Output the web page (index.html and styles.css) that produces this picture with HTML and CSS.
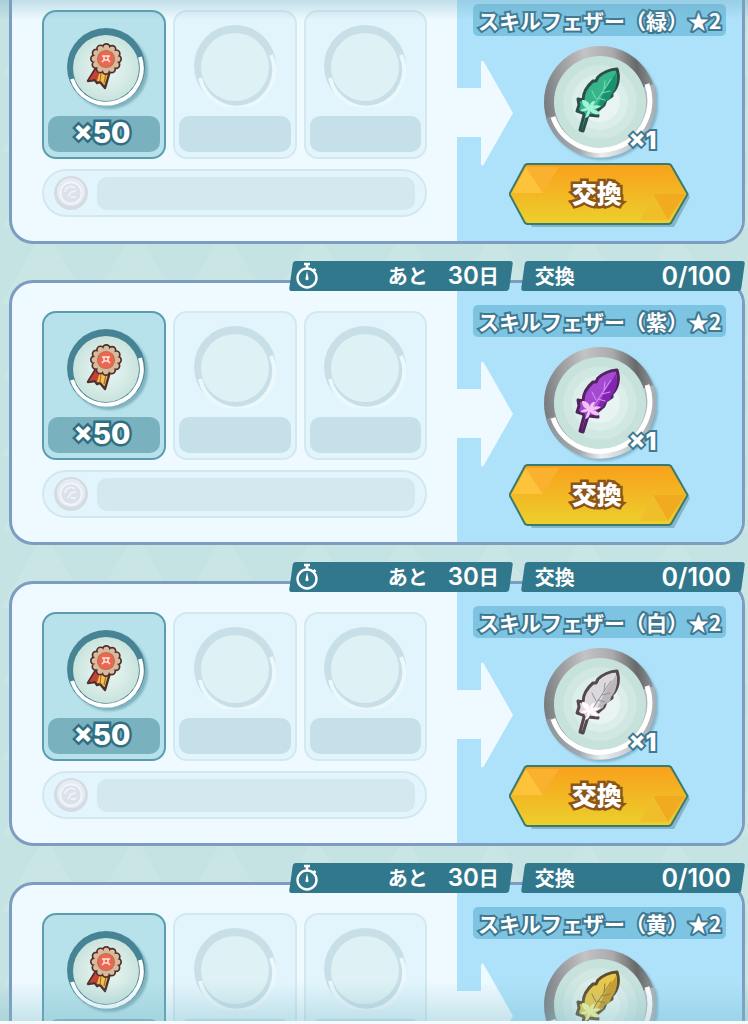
FILE: index.html
```html
<!DOCTYPE html>
<html lang="ja">
<head>
  <meta charset="UTF-8">
  <meta name="viewport" content="width=device-width, initial-scale=1">
  <title>交換所</title>
  <link rel="stylesheet" href="styles.css">
</head>
<body>
  <!-- shared icons -->
  <svg class="defs" width="0" height="0" aria-hidden="true">
    <defs>
      <linearGradient id="metalTop" x1="0" y1="0.5" x2="1" y2="0.4">
        <stop offset="0" stop-color="#777b7e"/>
        <stop offset="0.1" stop-color="#8c8f92"/>
        <stop offset="0.4" stop-color="#c3c2c4"/>
        <stop offset="0.65" stop-color="#aaa9ab"/>
        <stop offset="0.85" stop-color="#66686a"/>
        <stop offset="1" stop-color="#929799"/>
      </linearGradient>
      <linearGradient id="metalBottom" x1="0" y1="0.5" x2="1" y2="0.5">
        <stop offset="0" stop-color="#8e9498"/>
        <stop offset="0.3" stop-color="#a2a8ad"/>
        <stop offset="0.5" stop-color="#e9eef0"/>
        <stop offset="1" stop-color="#a5adb2"/>
      </linearGradient>
      <linearGradient id="gold" x1="0" y1="0" x2="0" y2="1">
        <stop offset="0" stop-color="#f9a01b"/>
        <stop offset="1" stop-color="#ecd02d"/>
      </linearGradient>
      <radialGradient id="disk">
        <stop offset="0" stop-color="#ebf6f4"/>
        <stop offset="0.5" stop-color="#dceeea"/>
        <stop offset="1" stop-color="#c9e3dd"/>
      </radialGradient>

      <symbol id="timer" viewBox="0 0 24 28">
        <circle cx="12" cy="16" r="9.5" fill="none" stroke="#fff" stroke-width="2.4"/>
        <path d="M9 2h6M12 2v4M18.5 7l2 2" stroke="#fff" stroke-width="2.6" fill="none"/>
        <path d="M12 9l1.4 7a1.6 1.6 0 1 1-2.8 0z" fill="#fff"/>
      </symbol>

      <symbol id="medal" viewBox="0 0 82 82">
        <circle cx="43" cy="42" r="39" fill="#468495"/>
        <circle cx="43" cy="43" r="33" fill="url(#disk)"/>
        <path d="M77 32A35 35 0 1 1 9 54" fill="none" stroke="#fff" stroke-width="4"/>
        <g transform="translate(2 2)" stroke-linejoin="round">
          <path d="M31 41L23 54l7-1 2 3 3-1 5 6 5-17z" fill="#f3c14f" stroke="#4d3029" stroke-width="2.4"/>
          <path d="M31 42L24 53l6-1 2 2 3-10z" fill="#c74135"/>
          <path d="M36 46l-1 9M41 47l-2 9" stroke="#b16a2c" stroke-width="1.2" fill="none"/>
          <g fill="none" stroke-linecap="round" stroke-dasharray="0 6.02">
            <circle cx="41" cy="32" r="11.5" stroke="#4d3029" stroke-width="9"/>
            <circle cx="41" cy="32" r="11.5" stroke="#dcbb9f" stroke-width="5.6"/>
          </g>
          <circle cx="41" cy="32" r="11.5" fill="#d9b79b"/>
          <circle cx="41" cy="32" r="8.5" fill="#ed6650" stroke="#b97454" stroke-width="1.2"/>
          <path d="M37 29h8M39 29v4l-2 2M43 29v4l2 2M39 33h4" stroke="#ffe5dc" stroke-width="1.5" fill="none"/>
        </g>
      </symbol>

      <symbol id="ring" viewBox="0 0 82 82">
        <circle cx="41" cy="41" r="41" fill="#c8dfe7"/>
        <circle cx="41" cy="42" r="34" fill="#def1f4"/>
        <path d="M77 30A37.500 37.500 0 1 1 6 53" fill="none" stroke="#ebf8fc" stroke-width="4"/>
      </symbol>

      <symbol id="coin" viewBox="0 0 34 34">
        <circle cx="17" cy="17" r="17" fill="#d4dbe3"/>
        <circle cx="17" cy="16" r="14" fill="#e6ecf2"/>
        <circle cx="17" cy="17" r="10.500" fill="#dce2e9" stroke="#f3f7fa" stroke-width="1.5"/>
        <path d="M11 16a6 6 0 0 1 10-4M14 21l3-5 5-1M17 21h5" fill="none" stroke="#eef3f7" stroke-width="1.8"/>
      </symbol>

      <symbol id="feather" viewBox="0 0 112 112">
        <circle cx="56" cy="56" r="56" fill="url(#metalTop)"/>
        <path d="M110 38A56 56 0 1 1 2 72L56 56z" fill="url(#metalBottom)"/>
        <circle cx="56" cy="56" r="46" fill="#c7e1db"/>
        <circle cx="56" cy="56" r="37" fill="#d1e7e2"/>
        <circle cx="56" cy="56" r="28" fill="#dceeea"/>
        <circle cx="56" cy="56" r="20" fill="#e7f4f1"/>
        <path d="M103 38A49 49 0 1 1 9 71" fill="none" stroke="#fff" stroke-width="5"/>
        <g stroke-linejoin="round" stroke-linecap="round">
          <path class="vane" d="M73 23C66 23 58 27 54 31l-2 4-3 0c-7 6-10 12-10 19l-5-1 1 6-2 6 6 2 1 2-4 15 3 1 5-16 10 1-1-5 7-6 2-5 6-4 0-3c6-6 8-15 5-24z"/>
          <path class="shade" d="M72 27c2 9 0 17-5 22l-1 4-6 4-1 3-7 3 9-19z"/>
          <path class="rib" d="M67 33L49 60M60 43l1-8M58 47l8-2M52 53l-4-8M54 52l7 2"/>
          <path class="petal" d="M46 60c-1-5-5-6-8-6 0 4 2 7 5 8-3 0-5 1-7 3 3 1 6 0 8-1l-3 8c4-1 5-4 5-7 3 3 6 4 10 3-1-3-4-4-7-5 3 0 6-1 8-3-3-1-6-1-8 0l2-5c-3 0-5 2-5 5z"/>
        </g>
      </symbol>

      <symbol id="plate" viewBox="0 0 182 64">
        <path d="M21 5h144l16 29-16 30H23L6 36z" fill="#86b4c8"/>
        <path d="M18 1h142l2 1 16 28q1 1 0 2l-16 28-2 1H18l-2-1L1 32q-1-1 0-2L16 2z" fill="url(#gold)" stroke="#397c6f" stroke-width="2"/>
        <path d="M17 4l17 26H3z" fill="#fcc33b"/>
        <path d="M17 4h33L34 30z" fill="#fbb130"/>
        <path d="M144 31h32l-17 26z" fill="#f0ab20"/>
        <path d="M144 31l15 26h-28z" fill="#efbe29"/>
      </symbol>

      <symbol id="arrow" viewBox="0 0 68 106">
        <path d="M0 28h36V2q1-3 3 0l29 51-29 51q-2 3-3 0V77H0z" fill="#eefaff"/>
      </symbol>
    </defs>
  </svg>

  <main class="screen">
    <div class="list">

      <article class="card green">
        <div class="panel">
          <section class="cost">
            <div class="slots">
              <div class="slot active"><svg class="ring"><use href="#medal"/></svg><div class="qty">×50</div></div>
              <div class="slot"><svg class="ring"><use href="#ring"/></svg><div class="qty"></div></div>
              <div class="slot"><svg class="ring"><use href="#ring"/></svg><div class="qty"></div></div>
            </div>
            <div class="money"><svg class="coin"><use href="#coin"/></svg><div class="amount"></div></div>
          </section>
          <section class="reward">
            <svg class="arrow"><use href="#arrow"/></svg>
            <h2 class="name">スキルフェザー（緑）★2</h2>
            <div class="item"><svg class="feather"><use href="#feather"/></svg><span class="times">×1</span></div>
            <button type="button" class="bt"><svg class="plate"><use href="#plate"/></svg><span class="bt-text">交換</span></button>
          </section>
        </div>
      </article>

      <article class="card purple">
        <header class="tags">
          <div class="tag"><svg class="timer"><use href="#timer"/></svg><span>あと　<span class="num">30</span>日</span></div>
          <div class="tag"><span>交換</span><span class="count">0/100</span></div>
        </header>
        <div class="panel">
          <section class="cost">
            <div class="slots">
              <div class="slot active"><svg class="ring"><use href="#medal"/></svg><div class="qty">×50</div></div>
              <div class="slot"><svg class="ring"><use href="#ring"/></svg><div class="qty"></div></div>
              <div class="slot"><svg class="ring"><use href="#ring"/></svg><div class="qty"></div></div>
            </div>
            <div class="money"><svg class="coin"><use href="#coin"/></svg><div class="amount"></div></div>
          </section>
          <section class="reward">
            <svg class="arrow"><use href="#arrow"/></svg>
            <h2 class="name">スキルフェザー（紫）★2</h2>
            <div class="item"><svg class="feather"><use href="#feather"/></svg><span class="times">×1</span></div>
            <button type="button" class="bt"><svg class="plate"><use href="#plate"/></svg><span class="bt-text">交換</span></button>
          </section>
        </div>
      </article>

      <article class="card white">
        <header class="tags">
          <div class="tag"><svg class="timer"><use href="#timer"/></svg><span>あと　<span class="num">30</span>日</span></div>
          <div class="tag"><span>交換</span><span class="count">0/100</span></div>
        </header>
        <div class="panel">
          <section class="cost">
            <div class="slots">
              <div class="slot active"><svg class="ring"><use href="#medal"/></svg><div class="qty">×50</div></div>
              <div class="slot"><svg class="ring"><use href="#ring"/></svg><div class="qty"></div></div>
              <div class="slot"><svg class="ring"><use href="#ring"/></svg><div class="qty"></div></div>
            </div>
            <div class="money"><svg class="coin"><use href="#coin"/></svg><div class="amount"></div></div>
          </section>
          <section class="reward">
            <svg class="arrow"><use href="#arrow"/></svg>
            <h2 class="name">スキルフェザー（白）★2</h2>
            <div class="item"><svg class="feather"><use href="#feather"/></svg><span class="times">×1</span></div>
            <button type="button" class="bt"><svg class="plate"><use href="#plate"/></svg><span class="bt-text">交換</span></button>
          </section>
        </div>
      </article>

      <article class="card yellow">
        <header class="tags">
          <div class="tag"><svg class="timer"><use href="#timer"/></svg><span>あと　<span class="num">30</span>日</span></div>
          <div class="tag"><span>交換</span><span class="count">0/100</span></div>
        </header>
        <div class="panel">
          <section class="cost">
            <div class="slots">
              <div class="slot active"><svg class="ring"><use href="#medal"/></svg><div class="qty"></div></div>
              <div class="slot"><svg class="ring"><use href="#ring"/></svg><div class="qty"></div></div>
              <div class="slot"><svg class="ring"><use href="#ring"/></svg><div class="qty"></div></div>
            </div>
            <div class="money"><svg class="coin"><use href="#coin"/></svg><div class="amount"></div></div>
          </section>
          <section class="reward">
            <svg class="arrow"><use href="#arrow"/></svg>
            <h2 class="name">スキルフェザー（黄）★2</h2>
            <div class="item"><svg class="feather"><use href="#feather"/></svg></div>
          </section>
        </div>
      </article>

    </div>
  </main>
</body>
</html>
```
FILE: styles.css
```css
* {
  box-sizing: border-box;
}
body {
  margin: 0;
  background: #f4fbfc;
  font-family: "Noto Sans CJK JP", "Noto Sans", sans-serif;
  font-weight: bold;
  color: #fff;
}
.defs {
  position: absolute;
}
.screen {
  position: relative;
  height: calc(100vh - 3px);
  overflow: hidden;
  background:
    conic-gradient(from 150deg at 50% 0, #c9e6e5 60deg, transparent 0) 0 0 / 90px 76px,
    #c6e3e3;
}
/* fade at both ends of the scroll area */
.screen::after {
  content: "";
  position: absolute;
  inset: 0;
  z-index: 3;
  pointer-events: none;
  background:
    linear-gradient(rgba(110, 170, 190, 0.35), transparent) top / 100% 20px no-repeat,
    linear-gradient(transparent, rgba(125, 185, 200, 0.35)) bottom / 100% 40px no-repeat;
}
.list {
  display: flex;
  flex-direction: column;
  gap: 17px;
  margin-top: -21px;
  padding: 0 3px 0 9px;
}

.tags {
  position: relative;
  z-index: 2;
  display: flex;
  gap: 8px;
  width: 62%;
  margin: 0 0 -11px auto;
}
.tag {
  position: relative;
  z-index: 0;
  flex: 1;
  display: flex;
  align-items: center;
  justify-content: space-between;
  height: 30px;
  padding: 0 14px;
  font-size: 20px;
  line-height: 28px;
}
.tag::before {
  content: "";
  position: absolute;
  inset: 0 2px;
  z-index: -1;
  border-radius: 3px;
  background: #31788c;
  transform: skewX(-8deg);
}
.timer {
  width: 24px;
  height: 28px;
  margin-left: -8px;
}
.num,
.count {
  font-family: Inter, sans-serif;
  font-weight: 600;
  font-size: 24px;
}
.count {
  font-size: 25px;
}

.panel {
  display: grid;
  grid-template-columns: 61fr 39fr;
  overflow: hidden;
  border: 3px solid #7c9cc2;
  border-radius: 24px;
  background: #eefaff;
}
.cost {
  padding: 28px 30px 24px;
}
.slots {
  display: grid;
  grid-template-columns: repeat(3, 1fr);
  gap: 7px;
}
.slot {
  display: flex;
  flex-direction: column;
  align-items: center;
  padding: 13px 4px 5px;
  border: 2px solid #d3e8ef;
  border-radius: 14px;
  background: #e3f5fc;
}
.active {
  border-color: #5b9dae;
  background: #b7e2eb;
}
.ring {
  width: 82px;
  height: 82px;
}
.active .ring {
  filter: drop-shadow(3px 3px 1px rgba(80, 140, 155, 0.55));
}
.qty {
  align-self: stretch;
  height: 36px;
  margin-top: 9px;
  padding-right: 4px;
  border-radius: 10px;
  background: #c5e0e8;
  font: 800 28px/34px Inter, sans-serif;
  text-align: center;
  -webkit-text-stroke: 5px #2f6f81;
  paint-order: stroke fill;
}
.active .qty {
  background: #7ab1bf;
}
.money {
  display: flex;
  align-items: center;
  gap: 9px;
  height: 48px;
  margin-top: 10px;
  padding: 0 10px;
  border: 2px solid #d3e8ee;
  border-radius: 24px;
  background: #e3f5fc;
}
.coin {
  width: 34px;
  height: 34px;
}
.amount {
  flex: 1;
  height: 33px;
  border-radius: 10px;
  background: #d3e8ef;
}

.reward {
  position: relative;
  display: flex;
  flex-direction: column;
  align-items: center;
  padding: 22px 0 14px;
  background: #aee2fa;
}
.arrow {
  position: absolute;
  left: -12px;
  top: 78px;
  width: 68px;
  height: 106px;
}
.name {
  margin: 0;
  padding: 0 5px;
  border-radius: 5px;
  background: #7dc4e3;
  font-size: 21px;
  line-height: 32px;
  white-space: nowrap;
  -webkit-text-stroke: 4px #3f7890;
  paint-order: stroke fill;
}
.item {
  position: relative;
  height: 112px;
  margin-top: 10px;
}
.feather {
  display: block;
  width: 112px;
  height: 112px;
  filter: drop-shadow(2px 2px 1px rgba(80, 140, 170, 0.5));
}
.times {
  position: absolute;
  right: -1px;
  bottom: 4px;
  font: 800 25px/28px Inter, sans-serif;
  -webkit-text-stroke: 4px #3f7890;
  paint-order: stroke fill;
}
.bt {
  display: grid;
  place-items: center;
  margin-top: 5px;
  padding: 0;
  border: none;
  background: none;
  color: #fff;
  font: 900 25px/32px "Noto Sans CJK JP", sans-serif;
  cursor: pointer;
}
.plate {
  grid-area: 1 / 1;
  width: 182px;
  height: 64px;
}
.bt-text {
  grid-area: 1 / 1;
  padding: 0 6px 6px 0;
  -webkit-text-stroke: 5px #8b5518;
  paint-order: stroke fill;
}

/* feather colours */
.vane {
  fill: var(--vane);
  stroke: var(--line);
  stroke-width: 3;
}
.shade {
  fill: var(--shade);
}
.rib {
  fill: none;
  stroke: var(--rib);
  stroke-width: 1;
}
.petal {
  fill: var(--petal);
}
.green {
  --vane: #36b58b;
  --shade: #18916e;
  --line: #2c4f4a;
  --rib: #7fdcb9;
  --petal: #a2f4d8;
}
.purple {
  --vane: #a548d2;
  --shade: #8225b2;
  --line: #51245f;
  --rib: #d698ec;
  --petal: #f5c2f8;
}
.white {
  --vane: #dcd9dd;
  --shade: #bbb7bd;
  --line: #564851;
  --rib: #96909a;
  --petal: #fff8fa;
}
.yellow {
  --vane: #e7c74c;
  --shade: #c79c2c;
  --line: #5d4c2e;
  --rib: #94752c;
  --petal: #f3f79a;
}
```
